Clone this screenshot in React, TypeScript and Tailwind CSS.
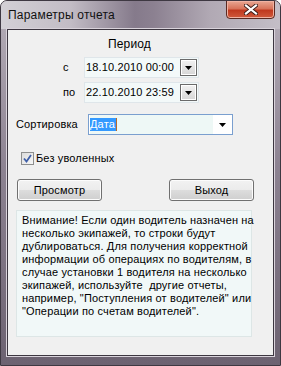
import type { ReactNode } from "react"

const memoLines = [
  "Внимание! Если один водитель назначен на",
  "несколько экипажей, то строки будут",
  "дублироваться. Для получения корректной",
  "информации об операциях по водителям, в",
  "случае установки 1 водителя на несколько",
  "экипажей, используйте  другие отчеты,",
  "например, \"Поступления от водителей\" или",
  "\"Операции по счетам водителей\".",
]

function DropArrow() {
  return (
    <svg width="7" height="4" viewBox="0 0 7 4">
      <path d="M0 0h7L3.5 4z" fill="#000" />
    </svg>
  )
}

function DateBox({ value }: { value: string }) {
  return (
    <div className="w-[115px] h-[21px] flex items-center bg-[#f3f9f9] border border-[#dfe6ea]">
      <span className="flex-1 pl-[1px] leading-none">{value}</span>
      <div className="w-[17px] h-[17px] mr-[1px] flex items-center justify-center border border-[#6a6a6a] shadow-[inset_0_0_0_1px_#ffffff] bg-gradient-to-b from-[#f2f2f2] to-[#d6d6d6]">
        <DropArrow />
      </div>
    </div>
  )
}

function Button({ children }: { children: ReactNode }) {
  return (
    <div className="w-[85px] h-[22px] flex items-center justify-center rounded-[3px] border border-[#707070] shadow-[inset_0_0_0_1px_#fcfcfc] bg-[linear-gradient(180deg,#f2f2f2_0%,#ebebeb_50%,#dddddd_50%,#cfcfcf_100%)]">
      {children}
    </div>
  )
}

export default function App() {
  return (
    <div className="w-[281px] h-[366px] flex flex-col rounded-t-[7px] border border-[#3e3842] bg-[linear-gradient(180deg,#b7b0ba_0%,#8d8392_45%,#6c6271_100%)] font-['Liberation_Sans',sans-serif] text-black overflow-hidden">
      {/* title bar */}
      <div className="h-[28px] flex items-start bg-[linear-gradient(90deg,#d3d0d6_0%,#c2bcc5_25%,#857a8b_48%,#8c8191_55%,#b1a9b4_75%,#c4bec7_100%)]">
        <span className="pl-[7px] pt-[7px] text-[12px] leading-[15px] tracking-[0.2px] text-[#111]">Параметры отчета</span>
        <div className="ml-auto mr-[5px] w-[49px] h-[19px] -mt-[1px] flex items-center justify-center rounded-b-[4px] border border-[#5a2a22] shadow-[inset_0_0_0_1px_#f0b2a2] bg-[linear-gradient(180deg,#e9a793_0%,#d7735a_45%,#c0391f_55%,#d05a3c_100%)]">
          <svg width="14" height="11" viewBox="0 0 14 11">
            <path d="M2 1.5L12 9.5M12 1.5L2 9.5" stroke="#3b1c18" strokeWidth="4" strokeLinecap="square" />
            <path d="M2 1.5L12 9.5M12 1.5L2 9.5" stroke="#ffffff" strokeWidth="2.2" strokeLinecap="square" />
          </svg>
        </div>
      </div>

      {/* client area */}
      <div className="mx-[6px] mb-[9px] flex-1 border border-[#3c3640] shadow-[0_0_0_1px_#d9d3db] bg-[#f0f0f0] text-[11px] leading-[13px] tracking-[0.15px]">
        <div className="w-[243px] mt-[7px] text-center text-[12px] leading-[15px]">Период</div>

        <div className="mt-[5px] flex items-center pl-[55px]">
          <span className="w-[21px]">с</span>
          <DateBox value="18.10.2010 00:00" />
        </div>
        <div className="mt-[4px] flex items-center pl-[55px]">
          <span className="w-[21px]">по</span>
          <DateBox value="22.10.2010 23:59" />
        </div>

        <div className="mt-[11px] flex items-center pl-[8px]">
          <span className="w-[72px]">Сортировка</span>
          <div className="w-[145px] h-[21px] flex items-center border border-[#7a9fcf] bg-white">
            <div className="flex-1 h-full flex items-center bg-[#eef8f6] ml-[1px] my-[1px]">
              <span className="bg-[#3399ff] text-white h-[13px] leading-[13px] pr-[1px]">Дата</span>
              <span className="w-[1px] h-[13px] bg-[#b86a2a]" />
            </div>
            <div className="w-[19px] flex items-center justify-center">
              <DropArrow />
            </div>
          </div>
        </div>

        <div className="mt-[17px] flex items-center pl-[13px]">
          <div className="w-[13px] h-[13px] border border-[#8e8f8f] bg-gradient-to-br from-[#dcdcdc] to-[#f7f7f7] flex items-center justify-center">
            <svg width="9" height="9" viewBox="0 0 9 9">
              <path d="M1 4.5L3.5 7.5L8 1" stroke="#3f5fa8" strokeWidth="1.8" fill="none" />
            </svg>
          </div>
          <span className="ml-[2px]">Без уволенных</span>
        </div>

        <div className="mt-[14px] flex pl-[9px] gap-[67px]">
          <Button>Просмотр</Button>
          <Button>Выход</Button>
        </div>

        <div className="mt-[9px] ml-[8px] w-[236px] h-[127px] border border-[#dde6e6] bg-[#f1f8f8] pl-[5px] pt-[3px] whitespace-pre">
          {memoLines.map((l) => (
            <div key={l}>{l}</div>
          ))}
        </div>
      </div>
    </div>
  )
}
